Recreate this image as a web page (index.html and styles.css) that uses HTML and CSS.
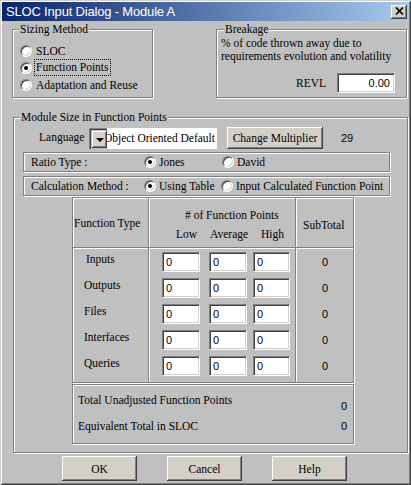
FILE: index.html
```html
<!DOCTYPE html>
<html>
<head>
<meta charset="utf-8">
<title>SLOC Input Dialog</title>
<link rel="stylesheet" href="styles.css">
</head>
<body>
<div class="window">
  <div class="titlebar">
    <span class="title">SLOC Input Dialog - Module A</span>
    <span class="close"><svg width="9" height="8" viewBox="0 0 9 8"><path d="M1 0.5L8 7.5M8 0.5L1 7.5" stroke="#000" stroke-width="1.7"/></svg></span>
  </div>
  <div class="client">
    <div class="top-row">
      <div class="group sizing">
        <span class="legend">Sizing Method</span>
        <div class="opt"><span class="radio"></span><span>SLOC</span></div>
        <div class="opt"><span class="radio on"></span><span class="focus">Function Points</span></div>
        <div class="opt"><span class="radio"></span><span>Adaptation and Reuse</span></div>
      </div>
      <div class="group breakage">
        <span class="legend">Breakage</span>
        <p class="desc">% of code thrown away due to<br>requirements evolution and volatility</p>
        <div class="revl"><span class="revl-label">REVL</span><span class="edit revl-edit">0.00</span></div>
      </div>
    </div>

    <div class="group module">
      <span class="legend">Module Size in Function Points</span>
      <div class="lang-row">
        <span class="lang-label">Language</span>
        <div class="combo">
          <span class="combo-frame"><span class="combo-btn"><span class="arrow"></span></span></span>
          <span class="combo-text"><span>Object Oriented Default</span></span>
        </div>
        <span class="btn mult">Change Multiplier</span>
        <span class="num mult-val">29</span>
      </div>

      <div class="band ratio">
        <span class="band-label">Ratio Type :</span>
        <span class="band-opt first-r"><span class="radio on"></span>Jones</span>
        <span class="band-opt"><span class="radio"></span>David</span>
      </div>
      <div class="band calc">
        <span class="band-label">Calculation Method :</span>
        <span class="band-opt first-c"><span class="radio on"></span>Using Table</span>
        <span class="band-opt"><span class="radio"></span>Input Calculated Function Point</span>
      </div>

      <div class="fp-table">
        <div class="cell h1">Function Type</div>
        <div class="cell h2">
          <div class="h2-title"># of Function Points</div>
          <div class="h2-sub"><span class="s-low">Low</span><span class="s-avg">Average</span><span>High</span></div>
        </div>
        <div class="cell h3">SubTotal</div>

        <div class="cell b1">
          <div class="lbl lbl-in">Inputs</div>
          <div class="lbl">Outputs</div>
          <div class="lbl">Files</div>
          <div class="lbl">Interfaces</div>
          <div class="lbl">Queries</div>
        </div>
        <div class="cell b2">
          <div class="irow"><span class="edit fp e-low">0</span><span class="edit fp e-avg">0</span><span class="edit fp e-high">0</span></div>
          <div class="irow"><span class="edit fp e-low">0</span><span class="edit fp e-avg">0</span><span class="edit fp e-high">0</span></div>
          <div class="irow"><span class="edit fp e-low">0</span><span class="edit fp e-avg">0</span><span class="edit fp e-high">0</span></div>
          <div class="irow"><span class="edit fp e-low">0</span><span class="edit fp e-avg">0</span><span class="edit fp e-high">0</span></div>
          <div class="irow"><span class="edit fp e-low">0</span><span class="edit fp e-avg">0</span><span class="edit fp e-high">0</span></div>
        </div>
        <div class="cell b3">
          <div class="val num">0</div>
          <div class="val num">0</div>
          <div class="val num">0</div>
          <div class="val num">0</div>
          <div class="val num">0</div>
        </div>
      </div>

      <div class="totals">
        <div class="trow t1"><span class="tlabel">Total Unadjusted Function Points</span><span class="tval num">0</span></div>
        <div class="trow t2"><span class="tlabel">Equivalent Total in SLOC</span><span class="tval num">0</span></div>
      </div>
    </div>

    <div class="buttons">
      <span class="btn dlg">OK</span>
      <span class="btn dlg">Cancel</span>
      <span class="btn dlg">Help</span>
    </div>
  </div>
</div>
</body>
</html>
```

FILE: styles.css
```css
html, body {
  margin: 0;
  padding: 0;
  background: #c0c0c0;
}

.window {
  width: 411px;
  height: 485px;
  box-sizing: border-box;
  padding: 2px;
  background: #c0c0c0;
  box-shadow: inset 1px 1px 0 #d4d0c8, inset -1px -1px 0 #404040,
              inset 2px 2px 0 #ffffff, inset -2px -2px 0 #808080;
  font-family: "Liberation Serif", "Times New Roman", serif;
  font-size: 11.5px;
  color: #000;
  overflow: hidden;
}

.num {
  font-family: "Liberation Sans", Arial, sans-serif;
  font-size: 11px;
}

/* ---------- title bar ---------- */
.titlebar {
  height: 19px;
  display: flex;
  align-items: center;
  justify-content: space-between;
  padding: 0 2px 0 4px;
  background: linear-gradient(to right, #0a246a, #a6caf0);
  color: #fff;
  font-family: "Liberation Sans", Arial, sans-serif;
  font-size: 13px;
  letter-spacing: -0.18px;
}

.close {
  width: 16px;
  height: 14px;
  box-sizing: border-box;
  background: #d4d0c8;
  box-shadow: inset -1px -1px 0 #404040, inset 1px 1px 0 #ffffff, inset -2px -2px 0 #808080;
  display: flex;
  align-items: center;
  justify-content: center;
  padding-bottom: 1px;
}

.client {
  padding-left: 10px;
}

/* ---------- group boxes ---------- */
.group {
  position: relative;
  box-sizing: border-box;
  border: 1px solid #808080;
  box-shadow: inset 1px 1px 0 #ffffff, 1px 1px 0 #ffffff;
}

.legend {
  position: absolute;
  top: -8px;
  left: 6px;
  padding: 0 1px;
  line-height: 14px;
  background: #c0c0c0;
  white-space: nowrap;
}

.top-row {
  display: flex;
  margin-top: 8px;
}

.sizing {
  width: 141px;
  height: 69px;
  padding: 12px 0 0 7px;
}

.opt {
  display: flex;
  align-items: center;
  height: 17px;
  white-space: nowrap;
}

.opt .radio {
  margin-right: 4px;
}

.focus {
  border: 1px dotted #000;
  margin-left: -2px;
  padding: 0 1px;
  line-height: 15px;
}

.breakage {
  width: 191px;
  height: 69px;
  margin-left: 63px;
  padding: 7px 11px 0 4px;
}

.breakage .legend {
  left: 7px;
}

.desc {
  margin: 0;
  line-height: 13px;
  white-space: nowrap;
}

.revl {
  display: flex;
  justify-content: flex-end;
  align-items: center;
  margin-top: 10px;
}

.revl-label {
  margin-right: 11px;
}

/* ---------- controls ---------- */
.radio {
  position: relative;
  display: inline-block;
  flex: none;
  width: 12px;
  height: 12px;
  box-sizing: border-box;
  border-radius: 50%;
  background: #fff;
  border: 1px solid;
  border-color: #808080 #ffffff #ffffff #808080;
  box-shadow: inset 1px 1px 0 #404040, inset -1px -1px 0 #d4d0c8;
}

.radio.on::after {
  content: "";
  position: absolute;
  left: 3px;
  top: 3px;
  width: 4px;
  height: 4px;
  border-radius: 50%;
  background: #000;
}

.edit {
  box-sizing: border-box;
  display: flex;
  align-items: center;
  background: #fff;
  border: 1px solid;
  border-color: #808080 #ffffff #ffffff #808080;
  box-shadow: inset 1px 1px 0 #404040, inset -1px -1px 0 #d4d0c8;
  font-family: "Liberation Sans", Arial, sans-serif;
  font-size: 11px;
}

.revl-edit {
  width: 58px;
  height: 20px;
  justify-content: flex-end;
  padding-right: 4px;
}

.btn {
  box-sizing: border-box;
  display: flex;
  align-items: center;
  justify-content: center;
  background: #d4d0c8;
  box-shadow: inset -1px -1px 0 #404040, inset 1px 1px 0 #ffffff, inset -2px -2px 0 #808080;
  white-space: nowrap;
}

/* ---------- module group ---------- */
.module {
  width: 395px;
  height: 336px;
  margin: 19px 0 0 1px;
  padding-top: 9px;
}

.lang-row {
  display: flex;
  align-items: center;
  height: 22px;
  padding-left: 25px;
}

.lang-label {
  width: 50px;
  padding-bottom: 3px;
}

.combo {
  display: flex;
  width: 128px;
  height: 21px;
  margin-right: 10px;
}

.combo-frame {
  box-sizing: border-box;
  width: 18px;
  height: 21px;
  padding: 2px 0 1px 2px;
  border-top: 1px solid #808080;
  border-left: 1px solid #808080;
  box-shadow: inset 1px 1px 0 #404040;
  display: flex;
}

.combo-btn {
  flex: 1;
  display: flex;
  align-items: center;
  justify-content: center;
  background: #d4d0c8;
  box-shadow: inset -1px -1px 0 #404040, inset 1px 1px 0 #ffffff, inset -2px -2px 0 #808080;
}

.arrow {
  width: 0;
  height: 0;
  border-left: 4px solid transparent;
  border-right: 4px solid transparent;
  border-top: 4px solid #000;
  margin-top: 1px;
}

.combo-text {
  flex: 1;
  overflow: hidden;
  display: flex;
  justify-content: flex-end;
  align-items: center;
  padding-right: 2px;
  background: #fff;
  white-space: nowrap;
}

.mult {
  width: 96px;
  height: 22px;
}

.mult-val {
  margin-left: 18px;
}

.band {
  display: flex;
  align-items: center;
  box-sizing: border-box;
  width: 367px;
  height: 20px;
  margin-left: 9px;
  padding-left: 7px;
  border: 1px solid #808080;
  box-shadow: inset 1px 1px 0 #ffffff, 1px 1px 0 #ffffff;
  white-space: nowrap;
}

.ratio {
  margin-top: 3px;
}

.calc {
  margin-top: 4px;
}

.band-label {
  width: 113px;
}

.band-opt {
  display: flex;
  align-items: center;
}

.band-opt .radio {
  margin-right: 3px;
}

.first-r {
  width: 78px;
}

.first-c {
  width: 77px;
}

/* ---------- function point table ---------- */
.fp-table {
  display: grid;
  grid-template-columns: 76px 147px 57px;
  grid-template-rows: 50px 134px;
  width: 282px;
  box-sizing: border-box;
  margin: 1px 0 0 58px;
  border: 1px solid #808080;
  box-shadow: inset 1px 1px 0 #ffffff, 1px 1px 0 #ffffff;
}

.cell {
  box-sizing: border-box;
}

.h1, .h2, .b1, .b2 {
  border-right: 1px solid #808080;
}

.h1, .h2, .h3 {
  border-bottom: 1px solid #808080;
}

.h1, .h2 {
  box-shadow: 1px 0 0 #ffffff, 0 1px 0 #ffffff;
}

.h3 {
  box-shadow: 0 1px 0 #ffffff;
}

.b1, .b2 {
  box-shadow: 1px 0 0 #ffffff;
}

.h1 {
  display: flex;
  align-items: center;
  padding-left: 1px;
  white-space: nowrap;
}

.h2 {
  padding-top: 10px;
  white-space: nowrap;
}

.h2-title {
  line-height: 14px;
  padding-left: 36px;
}

.h2-sub {
  display: flex;
  line-height: 14px;
  margin-top: 5px;
  padding-left: 27px;
}

.s-low {
  width: 34px;
}

.s-avg {
  width: 51px;
}

.h3 {
  display: flex;
  align-items: center;
  padding: 4px 0 0 7px;
}

.b1, .b2, .b3 {
  padding-top: 4px;
}

.lbl {
  height: 26px;
  line-height: 15px;
  padding-left: 11px;
}

.lbl-in {
  padding-left: 13px;
}

.irow {
  display: flex;
  height: 26px;
  padding-left: 13px;
}

.fp {
  height: 20px;
  padding-left: 3px;
}

.e-low {
  width: 38px;
}

.e-avg {
  width: 38px;
  margin-left: 9px;
}

.e-high {
  width: 37px;
  margin-left: 6px;
}

.val {
  height: 26px;
  line-height: 20px;
  text-align: center;
  padding-left: 1px;
}

/* ---------- totals ---------- */
.totals {
  box-sizing: border-box;
  width: 282px;
  height: 60px;
  margin: 1px 0 0 58px;
  padding: 8px 6px 0 5px;
  border: 1px solid #808080;
  box-shadow: inset 1px 1px 0 #ffffff, 1px 1px 0 #ffffff;
}

.trow {
  display: flex;
  justify-content: space-between;
  line-height: 14px;
}

.t1 {
  height: 20px;
}

.t1 .tval {
  align-self: flex-end;
}

.t2 {
  margin-top: 6px;
}

/* ---------- dialog buttons ---------- */
.buttons {
  display: flex;
  gap: 30px;
  margin: 3px 0 0 50px;
}

.dlg {
  width: 75px;
  height: 25px;
}
```
